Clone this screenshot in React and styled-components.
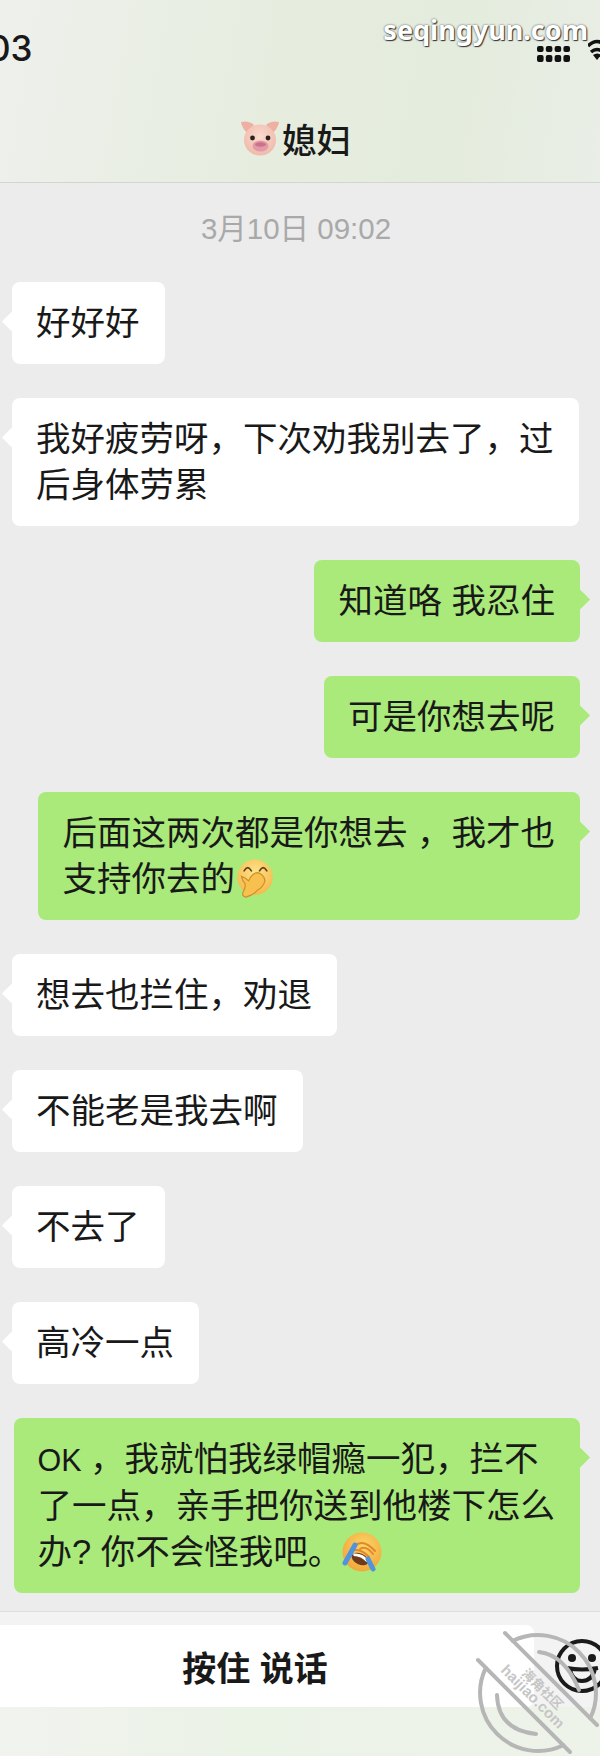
import styled, { createGlobalStyle } from 'styled-components';

const Global = createGlobalStyle`
   html, body { margin: 0; padding: 0; background: #ececec; }
`;
const Page = styled.div`
   background: #ececec;
   color: #191919;
   display: flex;
   flex-direction: column;
   font-family: "Liberation Sans", "Noto Sans CJK SC", sans-serif;
   height: 1756px;
   overflow: hidden;
   position: relative;
   width: 600px;
`;
const Top = styled.header`
   background: linear-gradient(100deg, #eef0ec 0%, #e6eddf 45%, #e4ecdd 75%, #e9eee6 100%);
   border-bottom: 1px solid #d3d5d1;
   box-sizing: border-box;
   flex: none;
   height: 183px;
   padding-top: 32px;
`;
const StatusBar = styled.div`
   align-items: center;
   display: flex;
   height: 32px;
   justify-content: space-between;
`;
const Clock = styled.div`
   font-family: Inter, sans-serif;
   font-size: 35px;
   font-weight: 500;
   margin-left: -12px;
`;
const StatusIcons = styled.div`
   align-items: flex-end;
   align-self: flex-end;
   display: flex;
   gap: 18px;
   margin-right: -10px;
   padding-bottom: 2px;
`;
const Title = styled.div`
   align-items: center;
   display: flex;
   font-size: 34.5px;
   font-weight: 500;
   gap: 3px;
   height: 40px;
   justify-content: center;
   margin: 54px 8px 0 0;
`;
const Chat = styled.main`
   display: flex;
   flex: 1;
   flex-direction: column;
   gap: 34px;
   padding: 0 20px 0 12px;
`;
const Time = styled.div`
   color: #a9a9a9;
   font-size: 29.5px;
   height: 36px;
   line-height: 36px;
   margin: 28px 0 1px;
   text-align: center;
`;
const Bubble = styled.div`
   align-self: ${p => (p.$mine ? 'flex-end' : 'flex-start')};
   background: ${p => (p.$mine ? '#a9ea7a' : '#ffffff')};
   border-radius: 8px;
   font-size: 34.5px;
   line-height: 46px;
   padding: 18px 25px 18px 24px;
   position: relative;
   white-space: nowrap;
   &::after {
      background: inherit;
      content: '';
      height: 15px;
      position: absolute;
      ${p => (p.$mine ? 'right: -7px;' : 'left: -7px;')}
      top: 32px;
      transform: rotate(45deg);
      width: 15px;
   }
`;
const Latin = styled.span`
   font-size: 30.5px;
`;
const Emoji = styled.svg`
   height: 40px;
   vertical-align: -8px;
   width: 40px;
`;
const Footer = styled.footer`
   background: linear-gradient(90deg, #f1f3ef 0%, #ebf2e6 40%, #eef3ea 100%);
   border-top: 1px solid #dfdfdf;
   box-sizing: border-box;
   flex: none;
   height: 145px;
   position: relative;
`;
const FooterBar = styled.div`
   align-items: center;
   background: #f3f3f3;
   box-sizing: border-box;
   display: flex;
   height: 95px;
   padding-top: 13px;
`;
const TalkButton = styled.div`
   align-items: center;
   background: #ffffff;
   border-radius: 0 8px 8px 0;
   display: flex;
   flex: none;
   font-size: 34px;
   font-weight: 700;
   height: 82px;
   justify-content: center;
   margin-left: -24px;
   width: 558px;
`;
const SmileIcon = styled.svg`
   flex: none;
   height: 56px;
   margin-left: 20px;
   width: 56px;
`;
const SiteMark = styled.div`
   color: #ffffff;
   font-family: "Noto Sans", sans-serif;
   font-size: 27px;
   font-weight: 700;
   position: absolute;
   right: 12px;
   text-shadow: 1px 1px 1px #333, 0 0 2px #444;
   top: 11px;
   &::after {
      background: linear-gradient(90deg, rgba(70, 70, 70, 0), rgba(70, 70, 70, 0.6));
      bottom: 0;
      content: '';
      filter: blur(2px);
      height: 7px;
      position: absolute;
      right: -4px;
      width: 70px;
      z-index: -1;
   }
`;
const Stamp = styled.svg`
   height: 156px;
   left: 440px;
   pointer-events: none;
   position: absolute;
   top: 1600px;
   width: 160px;
   & text {
      fill: #c6c6c6;
      font-family: "Liberation Sans", "Noto Sans CJK SC", sans-serif;
      font-weight: 700;
      stroke: none;
   }
`;

const Pig = () => (
   <svg width='38' height='36' viewBox='0 0 38 36'>
      <defs>
         <radialGradient id='pigHead' cx='0.5' cy='0.4' r='0.65'>
            <stop offset='0' stopColor='#fbdccf' />
            <stop offset='1' stopColor='#eeb7a8' />
         </radialGradient>
      </defs>
      <path d='M0 2 Q8 0 13 5 L6 13 Q1 8 0 2 Z' fill='#eeb0a2' />
      <path d='M38 2 Q30 0 25 5 L32 13 Q37 8 38 2 Z' fill='#eeb0a2' />
      <ellipse cx='19' cy='20' rx='16' ry='15.5' fill='url(#pigHead)' />
      <circle cx='11.5' cy='18' r='2.4' fill='#2a2222' />
      <circle cx='27' cy='18' r='2.4' fill='#2a2222' />
      <ellipse cx='19.5' cy='26' rx='8' ry='5.5' fill='#e29aa8' />
      <ellipse cx='19.5' cy='24.5' rx='5.5' ry='2.2' fill='#c9728a' />
   </svg>
);
const ShyFace = () => (
   <Emoji viewBox='0 0 40 44'>
      <defs>
         <radialGradient id='shyFace' cx='0.5' cy='0.35' r='0.7'>
            <stop offset='0' stopColor='#fde38a' />
            <stop offset='1' stopColor='#f5b647' />
         </radialGradient>
      </defs>
      <circle cx='20' cy='20' r='19.5' fill='url(#shyFace)' />
      <path d='M8 13 Q12 6 16 13 M25 13 Q29 6 33 13' fill='none' stroke='#5f4118' strokeWidth='1.8' strokeLinecap='round' />
      <path d='M5 19 Q10 21 13 24 Q17 15 23 15 Q30 17 31 24 Q29 31 23 34 Q18 40 10 42 Q5 41 7 36 Q10 31 9 27 Q6 24 5 19 Z' fill='#f7c04f' stroke='#cf8f2c' strokeWidth='1.3' />
   </Emoji>
);
const CryFace = () => (
   <Emoji viewBox='0 0 40 40'>
      <defs>
         <radialGradient id='cryFace' cx='0.55' cy='0.35' r='0.7'>
            <stop offset='0' stopColor='#fcd569' />
            <stop offset='1' stopColor='#f1a437' />
         </radialGradient>
      </defs>
      <circle cx='20' cy='20' r='19.5' fill='url(#cryFace)' />
      <path d='M14 13 Q22 7 33 19 M18 17 Q24 13 31 22 M12 18 Q20 17 27 25' fill='none' stroke='#e0892a' strokeWidth='2' strokeLinecap='round' />
      <g transform='rotate(25 18 27)'>
         <ellipse cx='18' cy='27' rx='9' ry='5.5' fill='#6d3b1b' />
         <path d='M9.5 25 Q18 20 26.5 25 L25 27 Q18 24 11 27 Z' fill='#ffffff' />
      </g>
      <path d='M13 13 L3 31' fill='none' stroke='#4f94dc' strokeWidth='5' strokeLinecap='round' />
      <path d='M26 27 L31 37' fill='none' stroke='#4f94dc' strokeWidth='5' strokeLinecap='round' />
   </Emoji>
);

const App = () => (
   <Page>
      <Global />
      <Top>
         <StatusBar>
            <Clock>03</Clock>
            <StatusIcons>
               <svg width='33' height='18' viewBox='0 0 33 18' fill='#111'>
                  {[0, 1, 2, 3].map(i => (
                     <g key={i}>
                        <rect x={i * 8.8} y='2' width='6.6' height='6' rx='2' />
                        <rect x={i * 8.8} y='11' width='6.6' height='7' rx='2' />
                     </g>
                  ))}
               </svg>
               <svg width='22' height='24' viewBox='0 0 22 24' fill='none' stroke='#111' strokeWidth='3.5'>
                  <path d='M0 8 Q9 -1 18 8 M3 14 Q9 9 15 14' />
                  <path d='M5 17 L9 22 L13 17 Q9 14 5 17 Z' fill='#111' stroke='none' />
               </svg>
            </StatusIcons>
         </StatusBar>
         <Title>
            <Pig />
            媳妇
         </Title>
      </Top>
      <Chat>
         <Time>3月10日 09:02</Time>
         <Bubble>好好好</Bubble>
         <Bubble>
            我好疲劳呀，下次劝我别去了，过
            <br />
            后身体劳累
         </Bubble>
         <Bubble $mine>知道咯 我忍住</Bubble>
         <Bubble $mine>可是你想去呢</Bubble>
         <Bubble $mine>
            后面这两次都是你想去 ，我才也
            <br />
            支持你去的
            <ShyFace />
         </Bubble>
         <Bubble>想去也拦住，劝退</Bubble>
         <Bubble>不能老是我去啊</Bubble>
         <Bubble>不去了</Bubble>
         <Bubble>高冷一点</Bubble>
         <Bubble $mine>
            <Latin>OK </Latin>，我就怕我绿帽瘾一犯，拦不
            <br />
            了一点，亲手把你送到他楼下怎么
            <br />
            办? 你不会怪我吧。
            <CryFace />
         </Bubble>
      </Chat>
      <Footer>
         <FooterBar>
            <TalkButton>按住 说话</TalkButton>
            <SmileIcon viewBox='0 0 56 56' fill='none' stroke='#1a1a1a' strokeWidth='4'>
               <circle cx='28' cy='28' r='25' />
               <circle cx='18' cy='20' r='4' fill='#1a1a1a' stroke='none' />
               <circle cx='38' cy='20' r='4' fill='#1a1a1a' stroke='none' />
               <path d='M13 30 Q28 33 44 30 M16 31 Q18 43 28 43 Q38 43 41 31' />
            </SmileIcon>
         </FooterBar>
      </Footer>
      <SiteMark>seqingyun.com</SiteMark>
      <Stamp viewBox='0 0 160 156' fill='none' stroke='#b6b6b6' strokeWidth='4' strokeLinecap='round'>
         <path d='M65 33 L157 125 M38 60 L130 152' />
         <path d='M72.8 40.8 A58 58 0 0 1 150.2 118.2' />
         <path d='M45.8 67.8 A58 58 0 0 0 123.2 145.2' />
         <path d='M99 52 Q125 55 139 90' />
         <path d='M57 95 Q58 130 96 134' />
         <text fontSize='13' transform='translate(81 74) rotate(45)'>海角社区</text>
         <text fontSize='15' transform='translate(60 71) rotate(45)'>haijiao.com</text>
      </Stamp>
   </Page>
);
export default App;
